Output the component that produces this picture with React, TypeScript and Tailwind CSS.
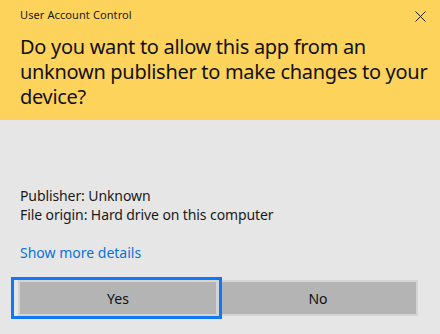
import React from 'react';

const font = { fontFamily: '"Noto Sans", "Open Sans", Arial, sans-serif' };

const App: React.FC = () => {
  return (
    <div className="w-[440px] h-[334px] bg-[#e6e6e6] flex flex-col text-black" style={font}>
      <header className="h-[120px] bg-[#fed35c] pl-5 flex flex-col relative">
        <div className="pt-[7px] text-[11px] tracking-[0.1px] leading-[16px] text-[#1a1a1a]">User Account Control</div>
        <button className="absolute right-[14px] top-[10px] w-3 h-3 flex items-center justify-center">
          <svg width="11" height="11" viewBox="0 0 11 11" fill="none" stroke="#222" strokeWidth="1">
            <path d="M0.5 0.5 L10.5 10.5 M10.5 0.5 L0.5 10.5" />
          </svg>
        </button>
        <h1 className="mt-[11px] w-[414px] text-[20px] tracking-[-0.3px] leading-[25px] font-normal text-[#111]">
          Do you want to allow this app from an unknown publisher to make changes to your device?
        </h1>
      </header>
      <main className="px-5 flex flex-col">
        <div className="mt-[66px] text-[14px] tracking-[-0.1px] leading-[19px] text-[#1a1a1a]">
          <p>Publisher: Unknown</p>
          <p>File origin: Hard drive on this computer</p>
        </div>
        <a className="mt-[19px] text-[14px] leading-[19px] text-[#0a74d6] cursor-pointer w-fit">Show more details</a>
        <div className="relative mt-[18px] -mx-[2px] flex">
          <button className="w-[200px] h-[36px] bg-[#b4b4b4] border-2 border-[#d4d4d4] text-[14px] text-[#111]">Yes</button>
          <button className="w-[200px] h-[36px] bg-[#b4b4b4] border-2 border-[#d4d4d4] text-[14px] text-[#111]">No</button>
          <div className="absolute left-[-7px] top-[-3px] w-[211px] h-[42px] border-[3px] border-[#1177f9] pointer-events-none" />
        </div>
      </main>
    </div>
  );
};

export default App;
